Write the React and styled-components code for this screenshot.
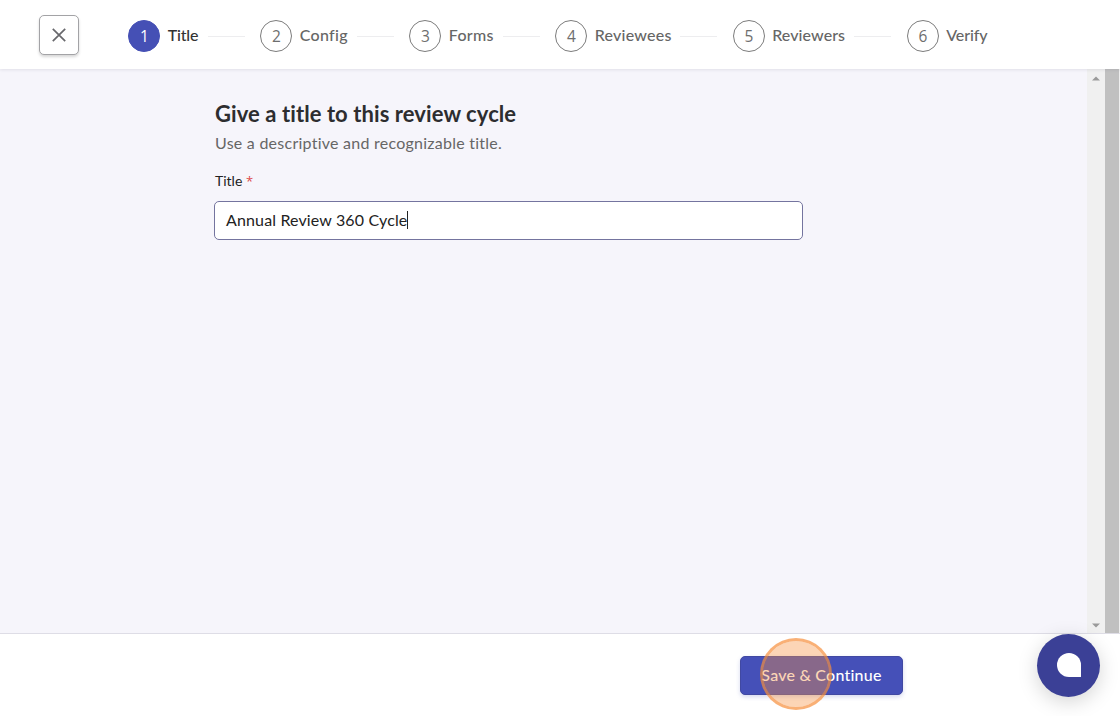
import React from 'react';
import styled, { createGlobalStyle } from 'styled-components';

const GlobalStyle = createGlobalStyle`
  * {
    box-sizing: border-box;
  }

  body {
    margin: 0;
    font-family: Lato, 'Liberation Sans', sans-serif;
    background: #fff;
    overflow: hidden;
  }
`;

const Page = styled.div`
  display: flex;
  flex-direction: column;
  width: 1120px;
  height: 716px;
  overflow: hidden;
  background: #fff;
`;

const Header = styled.header`
  position: relative;
  display: flex;
  flex-shrink: 0;
  align-items: center;
  height: 69px;
  padding: 2px 0 0 39px;
  background: #fff;
  box-shadow: 0 1px 3px rgba(40, 40, 70, 0.1);
`;

const CloseButton = styled.button`
  display: flex;
  align-items: center;
  justify-content: center;
  width: 40px;
  height: 40px;
  margin: -2px 49.4px 0 0;
  padding: 0;
  border: 1px solid #a3a3a6;
  border-radius: 5px;
  background: #fff;
  box-shadow: 0 2px 3px rgba(0, 0, 0, 0.16);
`;

const Steps = styled.nav`
  display: flex;
  align-items: center;
`;

const Step = styled.div`
  display: flex;
  align-items: center;
`;

const StepNumber = styled.span`
  display: flex;
  align-items: center;
  justify-content: center;
  width: 32px;
  height: 32px;
  margin-right: 7.4px;
  padding-top: 1px;
  border: 1px solid ${(props) => (props.$active ? '#4550b5' : '#7c7c7c')};
  border-radius: 50%;
  background: ${(props) => (props.$active ? '#4550b5' : '#fff')};
  color: ${(props) => (props.$active ? '#fff' : '#6e6e6e')};
  font-family: 'Open Sans', 'Noto Sans', sans-serif;
  font-size: 15.5px;
`;

const StepLabel = styled.span`
  width: ${(props) => props.$width}px;
  margin-top: -2px;
  color: ${(props) => (props.$active ? '#333' : '#666')};
  font-size: 16px;
  font-weight: 500;
  letter-spacing: ${(props) => props.$spacing}px;
  line-height: 24px;
  white-space: nowrap;
`;

const StepLine = styled.span`
  width: 37px;
  height: 1px;
  margin: 1px 15.6px 0 10px;
  background: #ededef;
`;

const Body = styled.div`
  display: flex;
  flex-shrink: 0;
  height: 564px;
`;

const Content = styled.main`
  flex: 1;
  padding: 31px 0 0 214px;
  background: #f6f5fb;
`;

const Heading = styled.h1`
  margin: 0;
  padding-left: 1px;
  color: #2d2d2f;
  font-size: 22px;
  font-weight: 700;
  letter-spacing: 0.08px;
  line-height: 28px;
  white-space: nowrap;
`;

const Hint = styled.p`
  margin: 3px 0 0;
  padding-left: 1px;
  color: #666;
  font-size: 16px;
  letter-spacing: 0.25px;
  line-height: 24px;
  white-space: nowrap;
`;

const Label = styled.label`
  display: block;
  margin-top: 16px;
  padding-left: 1px;
  color: #222;
  font-size: 14px;
  line-height: 20px;
`;

const Required = styled.span`
  color: #dc4a4a;
  font-family: 'Open Sans', sans-serif;
  font-size: 13px;
  line-height: 1;
`;

const Field = styled.div`
  display: flex;
  align-items: center;
  width: 589px;
  height: 39px;
  margin-top: 10px;
  padding: 0 11px 2px;
  border: 1px solid #74749f;
  border-radius: 5px;
  background: #fff;
  color: #222;
  font-size: 16px;
  letter-spacing: 0.14px;
  white-space: nowrap;
`;

const Caret = styled.span`
  width: 1px;
  height: 18px;
  background: #222;
`;

const Scrollbar = styled.div`
  display: flex;
  flex-direction: column;
  align-items: center;
  justify-content: space-between;
  width: 18px;
  padding: 7px 1px 5px 0;
  background: #f0f0f0;
`;

const Arrow = styled.svg`
  display: block;
  width: 8px;
  height: 5px;
  fill: #9a9a9a;
`;

const OuterScrollbar = styled.div`
  width: 15px;
  border-right: 1px solid #efefef;
  background: #c0c0c0;
`;

const Footer = styled.footer`
  position: relative;
  flex: 1;
  padding: 22px 0 0 740px;
  border-top: 1px solid #dedde6;
  background: #fff;
`;

const SaveButton = styled.button`
  display: block;
  width: 163px;
  height: 39px;
  padding: 0 0 3px;
  border: 1px solid #4149a2;
  border-radius: 5px;
  background: #4550b8;
  color: #fff;
  font-family: inherit;
  font-size: 16px;
  font-weight: 500;
  letter-spacing: 0.22px;
  box-shadow: 0 2px 4px rgba(69, 80, 181, 0.22);
`;

// marks the spot being clicked, on top of the button
const ClickMarker = styled.span`
  position: absolute;
  top: 4px;
  left: 760px;
  width: 72px;
  height: 72px;
  border: 3px solid rgba(246, 142, 60, 0.7);
  border-radius: 50%;
  background: rgba(248, 145, 62, 0.38);
  background-clip: padding-box;
`;

const ChatButton = styled.button`
  position: absolute;
  top: -0.5px;
  left: 1037.3px;
  display: flex;
  align-items: center;
  justify-content: center;
  width: 63px;
  height: 63px;
  padding: 0;
  border: 0;
  border-radius: 50%;
  background: #3b4096;
  box-shadow: 0 5px 20px rgba(0, 0, 0, 0.17);
`;

const steps = [
  { label: 'Title', width: 30, spacing: -0.2 },
  { label: 'Config', width: 47, spacing: 0.3 },
  { label: 'Forms', width: 44, spacing: 0.3 },
  { label: 'Reviewees', width: 75.5, spacing: 0.22 },
  { label: 'Reviewers', width: 72, spacing: 0.08 },
  { label: 'Verify', width: 41, spacing: -0.1 },
];

const App = () => {
  return (
    <Page>
      <GlobalStyle />
      <Header>
        <CloseButton aria-label="Close">
          <svg width="14" height="14" viewBox="0 0 14 14" fill="none" stroke="#68686c" strokeWidth="1.7">
            <path d="M0.8 0.8L13.2 13.2M13.2 0.8L0.8 13.2" />
          </svg>
        </CloseButton>
        <Steps>
          {steps.map((step, index) => (
            <Step key={step.label}>
              <StepNumber $active={index === 0}>{index + 1}</StepNumber>
              <StepLabel $active={index === 0} $width={step.width} $spacing={step.spacing}>
                {step.label}
              </StepLabel>
              {index < steps.length - 1 && <StepLine />}
            </Step>
          ))}
        </Steps>
      </Header>
      <Body>
        <Content>
          <Heading>Give a title to this review cycle</Heading>
          <Hint>Use a descriptive and recognizable title.</Hint>
          <Label>
            Title <Required>*</Required>
          </Label>
          <Field>
            Annual Review 360 Cycle
            <Caret />
          </Field>
        </Content>
        <Scrollbar>
          <Arrow viewBox="0 0 8 5">
            <path d="M0 4.5L4 0.5L8 4.5Z" />
          </Arrow>
          <Arrow viewBox="0 0 8 5">
            <path d="M0 0.5L4 4.5L8 0.5Z" />
          </Arrow>
        </Scrollbar>
        <OuterScrollbar />
      </Body>
      <Footer>
        <SaveButton>Save &amp; Continue</SaveButton>
        <ClickMarker />
        <ChatButton aria-label="Open chat">
          <svg width="24" height="24" viewBox="0 0 24 24" fill="#fff">
            <path d="M12 0A12 12 0 0 0 12 24H23.4Q24 24 24 23.4V12A12 12 0 0 0 12 0Z" />
          </svg>
        </ChatButton>
      </Footer>
    </Page>
  );
};

export default App;
